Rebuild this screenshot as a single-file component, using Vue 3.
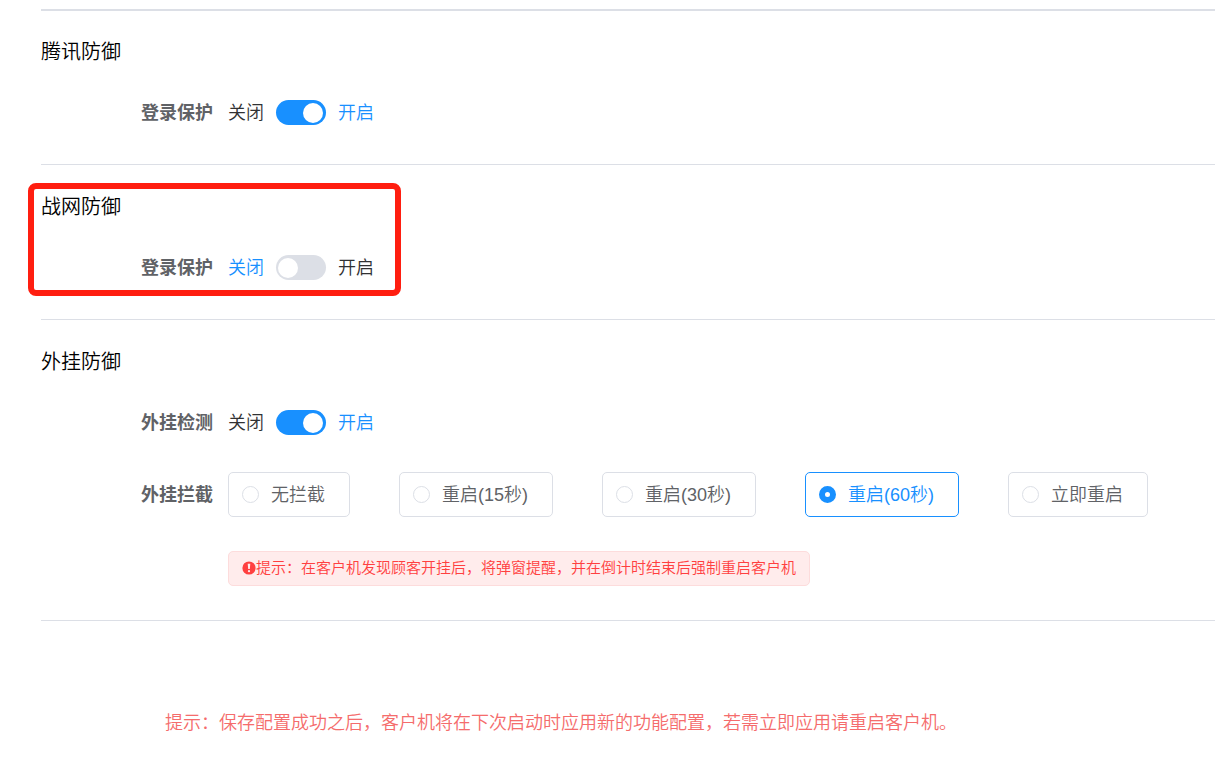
<script setup>
import { ref } from 'vue'

const tencent = ref(true)
const battleNet = ref(false)
const cheatDetect = ref(true)
const action = ref('60')

const actions = [
  { value: 'none', text: '无拦截' },
  { value: '15', text: '重启(15秒)' },
  { value: '30', text: '重启(30秒)' },
  { value: '60', text: '重启(60秒)' },
  { value: 'now', text: '立即重启' }
]
</script>

<template>
  <main class="page">
    <section class="section first">
      <h2 class="title">腾讯防御</h2>
      <div class="row">
        <label class="label" for="tencent">登录保护</label>
        <div class="switch-group">
          <span :class="{ active: !tencent }">关闭</span>
          <input id="tencent" v-model="tencent" class="switch" type="checkbox" role="switch" />
          <span :class="{ active: tencent }">开启</span>
        </div>
      </div>
    </section>

    <section class="section">
      <div class="highlight"></div>
      <h2 class="title">战网防御</h2>
      <div class="row">
        <label class="label" for="battle-net">登录保护</label>
        <div class="switch-group">
          <span :class="{ active: !battleNet }">关闭</span>
          <input id="battle-net" v-model="battleNet" class="switch" type="checkbox" role="switch" />
          <span :class="{ active: battleNet }">开启</span>
        </div>
      </div>
    </section>

    <section class="section cheats">
      <h2 class="title">外挂防御</h2>
      <div class="row">
        <label class="label" for="cheat-detect">外挂检测</label>
        <div class="switch-group">
          <span :class="{ active: !cheatDetect }">关闭</span>
          <input id="cheat-detect" v-model="cheatDetect" class="switch" type="checkbox" role="switch" />
          <span :class="{ active: cheatDetect }">开启</span>
        </div>
      </div>
      <div class="row options-row">
        <span id="action-label" class="label">外挂拦截</span>
        <div class="options" role="radiogroup" aria-labelledby="action-label">
          <label
            v-for="item in actions"
            :key="item.value"
            class="option"
            :class="{ checked: action === item.value }"
          >
            <input v-model="action" class="radio" type="radio" name="action" :value="item.value" />
            <span>{{ item.text }}</span>
          </label>
        </div>
      </div>
      <div class="alert" role="alert">
        <svg class="alert-icon" viewBox="0 0 14 14" aria-hidden="true">
          <circle cx="7" cy="7" r="6.6" fill="#ff4040" />
          <path d="M5.7 2.8h2.6l-.5 5.2H6.2z" fill="#ffecec" />
          <circle cx="7" cy="10.2" r="1.1" fill="#ffecec" />
        </svg>
        <span>提示：在客户机发现顾客开挂后，将弹窗提醒，并在倒计时结束后强制重启客户机</span>
      </div>
    </section>

    <p class="note">提示：保存配置成功之后，客户机将在下次启动时应用新的功能配置，若需立即应用请重启客户机。</p>
  </main>
</template>

<style>
body {
  margin: 0;
  background: #fff;
}
</style>

<style scoped>
.page {
  padding: 9px 0 24px 41px;
  font-family: "Liberation Sans", "Noto Sans CJK SC", sans-serif;
  font-size: 18px;
  font-weight: 350;
  line-height: 28px;
  color: #303133;
}

.section {
  position: relative;
  padding: 28px 0 29px;
  border-bottom: 1px solid #dcdfe6;
}

.first {
  padding-top: 27px;
  border-top: 2px solid #dcdfe6;
}

.cheats {
  padding-bottom: 34px;
}

.title {
  margin: 0;
  font-size: 20px;
  font-weight: 350;
  color: #000;
}

.row {
  display: flex;
  align-items: center;
  gap: 15px;
  min-height: 45px;
  margin-top: 24px;
}

.options-row {
  margin-top: 27px;
}

.label {
  flex: none;
  width: 172px;
  text-align: right;
  font-weight: 700;
  color: #606266;
}

.switch-group {
  display: flex;
  align-items: center;
  gap: 12px;
}

.active {
  color: #1890ff;
}

.switch {
  appearance: none;
  box-sizing: border-box;
  display: flex;
  align-items: center;
  width: 50px;
  height: 25px;
  margin: 0;
  padding: 0 3px 0 2px;
  border-radius: 13px;
  background: #dcdfe6;
  cursor: pointer;
}

.switch::before {
  content: "";
  width: 20px;
  height: 20px;
  border-radius: 50%;
  background: #fff;
}

.switch:checked {
  justify-content: flex-end;
  background: #1890ff;
}

.options {
  display: flex;
  flex-wrap: wrap;
  gap: 16px 49px;
}

.option {
  box-sizing: border-box;
  display: flex;
  align-items: center;
  gap: 12px;
  height: 45px;
  padding: 0 24px 0 13px;
  border: 1px solid #dcdfe6;
  border-radius: 5px;
  color: #606266;
  cursor: pointer;
}

.option.checked {
  border-color: #1890ff;
  color: #1890ff;
}

.radio {
  appearance: none;
  box-sizing: border-box;
  width: 17px;
  height: 17px;
  margin: 0;
  border: 1px solid #dcdfe6;
  border-radius: 50%;
  background: #fff;
}

.radio:checked {
  border: 6px solid #1890ff;
}

.alert {
  box-sizing: border-box;
  display: flex;
  align-items: center;
  width: fit-content;
  min-height: 35px;
  margin: 34px 0 0 187px;
  padding: 0 13px 2px;
  border: 1px solid #fddcdc;
  border-radius: 5px;
  background: #ffecec;
  font-size: 15px;
  color: #ff4040;
}

.alert-icon {
  flex: none;
  width: 14px;
  height: 14px;
}

.note {
  margin: 88px 0 0 124px;
  color: #f56c6c;
}

.highlight {
  position: absolute;
  top: 18px;
  left: -13px;
  box-sizing: border-box;
  width: 373px;
  height: 113px;
  border: 6px solid #ff1e10;
  border-radius: 8px;
  pointer-events: none;
}
</style>
